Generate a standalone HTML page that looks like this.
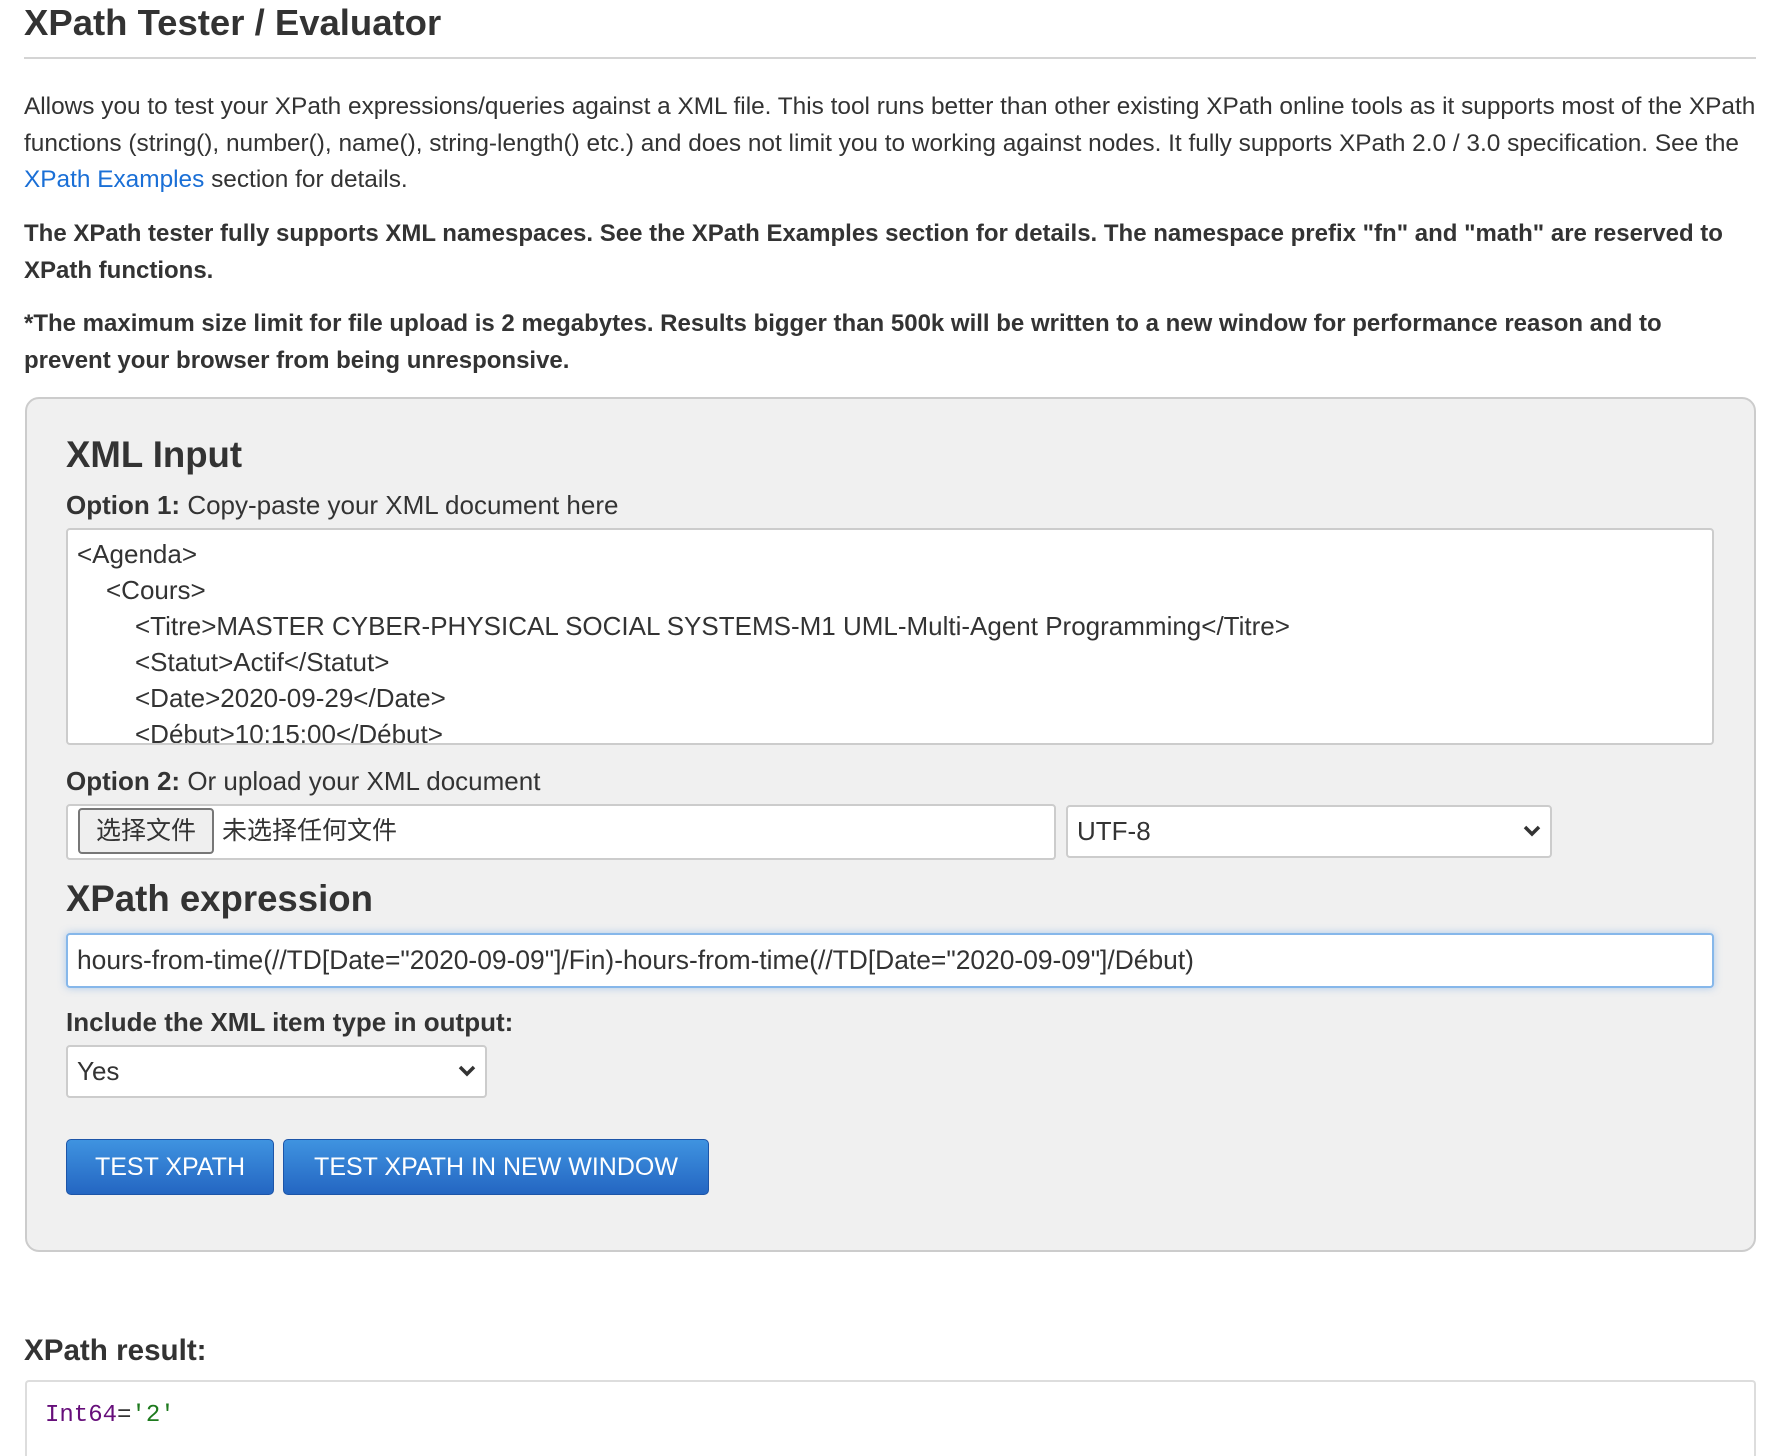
<!DOCTYPE html>
<html><head><meta charset="utf-8"><style>
*{box-sizing:border-box;margin:0;padding:0}
html,body{width:1786px;height:1456px;overflow:hidden}
body{background:#fff;font-family:"Liberation Sans","Noto Sans CJK SC",sans-serif;color:#333;position:relative}
.a{position:absolute;white-space:nowrap}
p.t{position:absolute;left:24px;width:1740px;font-size:24.4px;line-height:36.5px;white-space:normal}
p.b{font-weight:bold;font-size:24px;width:1720px}
h1{position:absolute;left:24px;top:2px;font-size:36.5px;font-weight:bold;color:#333}
.hr{position:absolute;left:24px;top:57px;width:1732px;height:2px;background:#d4d4d4}
.panel{position:absolute;left:25px;top:397px;width:1731px;height:855px;background:#f0f0f0;border:2px solid #ccc;border-radius:14px}
h2{position:absolute;font-size:36.6px;font-weight:bold;color:#333}
.lbl{position:absolute;font-size:26px}
.box{position:absolute;background:#fff;border:2px solid #ccc;border-radius:4px}
.btn{position:absolute;background:linear-gradient(#3f93e0,#2466c2);border:1px solid #1d55a8;border-radius:5px;color:#fff;font-size:25px;text-align:center;line-height:54px}
</style></head><body>
<h1>XPath Tester / Evaluator</h1>
<div class="hr"></div>
<p class="t" style="top:89px">Allows you to test your XPath expressions/queries against a XML file. This tool runs better than other existing XPath online tools as it supports most of the XPath functions (string(), number(), name(), string-length() etc.) and does not limit you to working against nodes. It fully supports XPath 2.0 / 3.0 specification. See the <span style="color:#1a6fd6">XPath Examples</span> section for details.</p>
<p class="t b" style="top:216px">The XPath tester fully supports XML namespaces. See the XPath Examples section for details. The namespace prefix "fn" and "math" are reserved to XPath functions.</p>
<p class="t b" style="top:306px">*The maximum size limit for file upload is 2 megabytes. Results bigger than 500k will be written to a new window for performance reason and to prevent your browser from being unresponsive.</p>
<div class="panel"></div>
<h2 style="left:66px;top:434px">XML Input</h2>
<div class="lbl" style="left:66px;top:490px"><b>Option 1:</b> Copy-paste your XML document here</div>
<div class="box" style="left:66px;top:528px;width:1648px;height:217px;overflow:hidden;font-size:26px;line-height:36px;padding:6px 0 0 9px">
<div>&lt;Agenda&gt;</div>
<div style="padding-left:29px">&lt;Cours&gt;</div>
<div style="padding-left:58px">&lt;Titre&gt;MASTER CYBER-PHYSICAL SOCIAL SYSTEMS-M1 UML-Multi-Agent Programming&lt;/Titre&gt;</div>
<div style="padding-left:58px">&lt;Statut&gt;Actif&lt;/Statut&gt;</div>
<div style="padding-left:58px">&lt;Date&gt;2020-09-29&lt;/Date&gt;</div>
<div style="padding-left:58px">&lt;Début&gt;10:15:00&lt;/Début&gt;</div>
</div>
<div class="lbl" style="left:66px;top:766px"><b>Option 2:</b> Or upload your XML document</div>
<div class="box" style="left:66px;top:804px;width:990px;height:56px"></div>
<div class="a" style="left:78px;top:808px;width:136px;height:46px;border:2px solid #777;border-radius:4px;background:#efefef;font-size:25px;text-align:center;line-height:42px">选择文件</div>
<div class="a" style="left:222px;top:813px;font-size:25px;line-height:36px">未选择任何文件</div>
<div class="box" style="left:1066px;top:805px;width:486px;height:53px;font-size:26px;line-height:49px;padding-left:9px">UTF-8
<svg style="position:absolute;right:8px;top:17px" width="20" height="14" viewBox="0 0 20 14"><path d="M3 3 L10 10 L17 3" stroke="#333" stroke-width="3.5" fill="none"/></svg></div>
<h2 style="left:66px;top:878px">XPath expression</h2>
<div class="box" style="left:66px;top:933px;width:1648px;height:55px;border-color:#86b7ea;box-shadow:0 0 8px rgba(102,160,230,.5);font-size:26.4px;line-height:51px;padding-left:9px">hours-from-time(//TD[Date="2020-09-09"]/Fin)-hours-from-time(//TD[Date="2020-09-09"]/Début)</div>
<div class="lbl" style="left:66px;top:1007px;font-weight:bold">Include the XML item type in output:</div>
<div class="box" style="left:66px;top:1045px;width:421px;height:53px;font-size:26px;line-height:49px;padding-left:9px">Yes
<svg style="position:absolute;right:8px;top:17px" width="20" height="14" viewBox="0 0 20 14"><path d="M3 3 L10 10 L17 3" stroke="#333" stroke-width="3.5" fill="none"/></svg></div>
<div class="btn" style="left:66px;top:1139px;width:208px;height:56px">TEST XPATH</div>
<div class="btn" style="left:283px;top:1139px;width:426px;height:56px">TEST XPATH IN NEW WINDOW</div>
<div class="lbl" style="left:24px;top:1334px;font-size:29.6px;font-weight:bold">XPath result:</div>
<div class="a" style="left:25px;top:1380px;width:1731px;height:76px;border:2px solid #ddd;border-bottom:none;border-radius:4px 4px 0 0;background:#fff"></div>
<div class="a" style="left:45px;top:1400px;font-family:'Liberation Mono',monospace;font-size:24px;line-height:32px"><span style="color:#660e7a">Int64</span><span style="color:#333">=</span><span style="color:#1e7a1e">'2'</span></div>
</body></html>
